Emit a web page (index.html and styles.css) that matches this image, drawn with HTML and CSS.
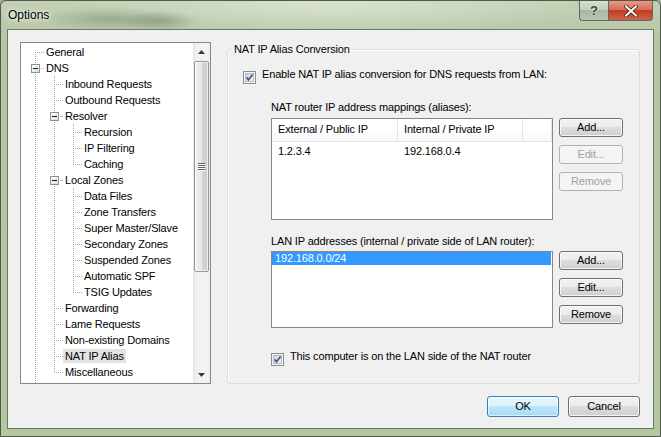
FILE: index.html
```html
<!DOCTYPE html>
<html>
<head>
<meta charset="utf-8">
<link rel="stylesheet" href="styles.css">
</head>
<body>
<div class="window">
  <div class="titlebar">
    <span class="title">Options</span>
    <div class="caption">
      <span class="cbtn help">?</span>
      <span class="cbtn close">
        <svg width="14" height="12" viewBox="0 0 14 12"><path d="M2 1.5 L12 10.5 M12 1.5 L2 10.5" stroke="#3a1a14" stroke-width="3.6" stroke-linecap="square" fill="none"/><path d="M2 1.5 L12 10.5 M12 1.5 L2 10.5" stroke="#ffffff" stroke-width="2" stroke-linecap="square" fill="none"/></svg>
      </span>
    </div>
  </div>
  <div class="client">
    <div class="main">
      <div class="tree">
        <div class="tree-items">
          <div class="row"><span class="g f"></span><span class="lbl">General</span></div>
          <div class="row"><span class="g t"><span class="box"></span></span><span class="lbl">DNS</span></div>
          <div class="row"><span class="g i"></span><span class="g t"></span><span class="lbl">Inbound Requests</span></div>
          <div class="row"><span class="g i"></span><span class="g t"></span><span class="lbl">Outbound Requests</span></div>
          <div class="row"><span class="g i"></span><span class="g t"><span class="box"></span></span><span class="lbl">Resolver</span></div>
          <div class="row"><span class="g i"></span><span class="g i"></span><span class="g t"></span><span class="lbl">Recursion</span></div>
          <div class="row"><span class="g i"></span><span class="g i"></span><span class="g t"></span><span class="lbl">IP Filtering</span></div>
          <div class="row"><span class="g i"></span><span class="g i"></span><span class="g l"></span><span class="lbl">Caching</span></div>
          <div class="row"><span class="g i"></span><span class="g t"><span class="box"></span></span><span class="lbl">Local Zones</span></div>
          <div class="row"><span class="g i"></span><span class="g i"></span><span class="g t"></span><span class="lbl">Data Files</span></div>
          <div class="row"><span class="g i"></span><span class="g i"></span><span class="g t"></span><span class="lbl">Zone Transfers</span></div>
          <div class="row"><span class="g i"></span><span class="g i"></span><span class="g t"></span><span class="lbl">Super Master/Slave</span></div>
          <div class="row"><span class="g i"></span><span class="g i"></span><span class="g t"></span><span class="lbl">Secondary Zones</span></div>
          <div class="row"><span class="g i"></span><span class="g i"></span><span class="g t"></span><span class="lbl">Suspended Zones</span></div>
          <div class="row"><span class="g i"></span><span class="g i"></span><span class="g t"></span><span class="lbl">Automatic SPF</span></div>
          <div class="row"><span class="g i"></span><span class="g i"></span><span class="g l"></span><span class="lbl">TSIG Updates</span></div>
          <div class="row"><span class="g i"></span><span class="g t"></span><span class="lbl">Forwarding</span></div>
          <div class="row"><span class="g i"></span><span class="g t"></span><span class="lbl">Lame Requests</span></div>
          <div class="row"><span class="g i"></span><span class="g t"></span><span class="lbl">Non-existing Domains</span></div>
          <div class="row"><span class="g i"></span><span class="g t"></span><span class="lbl sel">NAT IP Alias</span></div>
          <div class="row"><span class="g i"></span><span class="g l"></span><span class="lbl">Miscellaneous</span></div>
          <div class="row"><span class="g i"></span></div>
        </div>
        <div class="vscroll">
          <div class="arrow"><svg width="7" height="4" viewBox="0 0 7 4"><path d="M0 4 L3.5 0 L7 4 Z" fill="#3a3a3a"/></svg></div>
          <div class="track">
            <div class="thumb"><span class="grip"></span><span class="grip"></span><span class="grip"></span><span class="grip"></span></div>
          </div>
          <div class="arrow down"><svg width="7" height="4" viewBox="0 0 7 4"><path d="M0 0 L3.5 4 L7 0 Z" fill="#3a3a3a"/></svg></div>
        </div>
      </div>
      <fieldset class="group">
        <legend>NAT IP Alias Conversion</legend>
        <div class="check check1">
          <svg class="cb" width="13" height="13" viewBox="0 0 13 13"><defs><linearGradient id="cg1" x1="0" y1="0" x2="1" y2="1"><stop offset="0" stop-color="#cbcfd5"/><stop offset="1" stop-color="#f6f6f6"/></linearGradient></defs><rect x="0.5" y="0.5" width="12" height="12" fill="#f4f4f4" stroke="#8e8f8f"/><rect x="2.5" y="2.5" width="8" height="8" fill="url(#cg1)" stroke="#b9bec6"/><path d="M3.6 6.4 L5.5 8.8 L9.6 3.4" stroke="#4a5a86" stroke-width="1.7" fill="none"/></svg>
          <span>Enable NAT IP alias conversion for DNS requests from LAN:</span>
        </div>
        <div class="sublabel label1">NAT router IP address mappings (aliases):</div>
        <div class="listrow lr1">
          <div class="listview">
            <div class="lv-head"><span class="col c1">External / Public IP</span><span class="col c2">Internal / Private IP</span><span class="col c3"></span></div>
            <div class="lv-row"><span class="col c1">1.2.3.4</span><span class="col c2">192.168.0.4</span></div>
          </div>
          <div class="btncol">
            <button class="btn">Add...</button>
            <button class="btn" disabled>Edit...</button>
            <button class="btn" disabled>Remove</button>
          </div>
        </div>
        <div class="sublabel label2">LAN IP addresses (internal / private side of LAN router):</div>
        <div class="listrow lr2">
          <div class="listbox">
            <div class="lb-item sel">192.168.0.0/24</div>
          </div>
          <div class="btncol">
            <button class="btn">Add...</button>
            <button class="btn">Edit...</button>
            <button class="btn">Remove</button>
          </div>
        </div>
        <div class="check check2">
          <svg class="cb" width="13" height="13" viewBox="0 0 13 13"><defs><linearGradient id="cg2" x1="0" y1="0" x2="1" y2="1"><stop offset="0" stop-color="#cbcfd5"/><stop offset="1" stop-color="#f6f6f6"/></linearGradient></defs><rect x="0.5" y="0.5" width="12" height="12" fill="#f4f4f4" stroke="#8e8f8f"/><rect x="2.5" y="2.5" width="8" height="8" fill="url(#cg2)" stroke="#b9bec6"/><path d="M3.6 6.4 L5.5 8.8 L9.6 3.4" stroke="#4a5a86" stroke-width="1.7" fill="none"/></svg>
          <span>This computer is on the LAN side of the NAT router</span>
        </div>
      </fieldset>
    </div>
    <div class="footer">
      <button class="btn big default">OK</button>
      <button class="btn big">Cancel</button>
    </div>
  </div>
</div>
</body>
</html>
```
FILE: styles.css
```css
html, body {
  margin: 0;
  padding: 0;
}
body {
  width: 661px;
  height: 437px;
  overflow: hidden;
  background: #9fae93;
  font-family: "Liberation Sans", Arial, sans-serif;
  font-size: 11px;
  letter-spacing: -0.15px;
  color: #000;
}
.window {
  box-sizing: border-box;
  height: 437px;
  display: flex;
  flex-direction: column;
  border: 1px solid #4f5a4b;
  border-radius: 6px 6px 0 0;
  background:
    radial-gradient(ellipse 70px 12px at 110px 18px, rgba(90,110,80,.35), transparent),
    radial-gradient(ellipse 40px 10px at 160px 20px, rgba(80,100,70,.35), transparent),
    radial-gradient(ellipse 260px 30px at 330px 4px, rgba(235,242,225,.55), transparent),
    linear-gradient(#c3d0b6, #b5c6a4 40px, #b3c7a0);
}
.titlebar {
  height: 28px;
  display: flex;
  align-items: flex-start;
  flex: none;
}
.title {
  font-size: 12px;
  letter-spacing: 0;
  line-height: 15px;
  padding: 7px 0 0 7px;
  color: #000;
  text-shadow: 0 0 6px rgba(255,255,255,.9), 0 0 3px rgba(255,255,255,.9);
}
.caption {
  margin-left: auto;
  margin-right: 7px;
  display: flex;
}
.cbtn {
  box-sizing: border-box;
  height: 20px;
  display: flex;
  align-items: center;
  justify-content: center;
  border: 1px solid #5f6a5a;
  border-top: none;
}
.help {
  width: 29px;
  border-radius: 0 0 0 4px;
  border-right: none;
  background: linear-gradient(#d8e0d2, #c0ccb8 50%, #a9b6a1 50%, #b8c5b0);
  color: #3d3d3d;
  font-size: 13px;
  font-weight: bold;
  text-shadow: 0 0 2px #fff;
}
.close {
  width: 45px;
  border-radius: 0 0 4px 0;
  background: linear-gradient(#e99a86, #d66a52 50%, #c43c22 50%, #d0624a);
}
.client {
  flex: 1;
  margin: 0 6px 7px 6px;
  border: 1px solid #6c7866;
  background: #f0f0f0;
  padding: 12px 13px 11px 12px;
  display: flex;
  flex-direction: column;
}
.main {
  display: flex;
  gap: 16px;
  height: 342px;
}

/* tree */
.tree {
  box-sizing: border-box;
  width: 191px;
  height: 342px;
  border: 1px solid #828790;
  background: #fff;
  display: flex;
}
.tree-items {
  flex: 1;
  overflow: hidden;
  padding: 1px 0 0 5px;
}
.row {
  height: 16px;
  display: flex;
  align-items: center;
}
.g {
  flex: none;
  width: 19px;
  height: 16px;
  display: flex;
  align-items: flex-start;
  background-repeat: no-repeat;
  --v: repeating-linear-gradient(to bottom, #a0a0a0 0 1px, transparent 1px 2px);
  --h: repeating-linear-gradient(to right, #a0a0a0 0 1px, transparent 1px 2px);
}
.g.i {
  background-image: var(--v);
  background-position: 9px 0;
  background-size: 1px 16px;
}
.g.t {
  background-image: var(--v), var(--h);
  background-position: 9px 0, 9px 8px;
  background-size: 1px 16px, 10px 1px;
}
.g.l {
  background-image: var(--v), var(--h);
  background-position: 9px 0, 9px 8px;
  background-size: 1px 9px, 10px 1px;
}
.g.f {
  background-image: var(--v), var(--h);
  background-position: 9px 8px, 9px 8px;
  background-size: 1px 8px, 10px 1px;
}
.box {
  box-sizing: border-box;
  width: 9px;
  height: 9px;
  margin: 4px 0 0 5px;
  border: 1px solid #919191;
  background: linear-gradient(135deg, #ffffff, #dcdcdc);
  display: flex;
  align-items: center;
  justify-content: center;
}
.box::after {
  content: "";
  width: 5px;
  height: 1px;
  background: #1a1a1a;
}
.lbl {
  line-height: 14px;
  height: 14px;
  padding: 0 2px;
  margin-left: -1px;
  white-space: nowrap;
}
.lbl.sel {
  background: #e3e3e3;
}
.vscroll {
  flex: none;
  width: 17px;
  display: flex;
  flex-direction: column;
  background: linear-gradient(to right, #e3e3e3, #f0f0f0 3px, #f4f4f4 14px, #ececec);
}
.arrow {
  height: 17px;
  display: flex;
  align-items: center;
  justify-content: center;
  flex: none;
}
.track {
  flex: 1;
  padding-top: 1px;
}
.thumb {
  box-sizing: border-box;
  margin: 0 1px;
  height: 211px;
  border: 1px solid #979797;
  border-radius: 2px;
  background: linear-gradient(to right, #f1f1f1, #e6e6e6 50%, #d6d6d6 50%, #cbcbcb);
  box-shadow: inset 0 0 0 1px rgba(255,255,255,.7);
  display: flex;
  flex-direction: column;
  justify-content: center;
  align-items: center;
  gap: 1px;
}
.grip {
  width: 7px;
  height: 1px;
  background: #5e5e5e;
  box-shadow: 0 1px 0 #fff;
}

/* group */
.group {
  box-sizing: border-box;
  width: 413px;
  margin: 1px 0 0 0;
  padding: 0;
  border: 1px solid #d5dfe5;
  border-radius: 3px;
  box-shadow: inset 1px 1px 0 #fff;
  min-width: 0;
}
.group legend {
  padding: 0 2px;
  margin-left: 4px;
  line-height: 13px;
}
.check {
  display: flex;
  align-items: flex-start;
  gap: 6px;
  line-height: 13px;
}
.cb {
  flex: none;
  margin-top: 3px;
}
.check1 {
  margin: 12px 0 0 15px;
}
.sublabel {
  line-height: 13px;
  margin-left: 43px;
}
.label1 {
  margin-top: 17px;
}
.listrow {
  display: flex;
  gap: 6px;
  margin-left: 43px;
  align-items: flex-start;
}
.lr1 {
  margin-top: 4px;
}
.label2 {
  margin-top: 15px;
}
.lr2 {
  margin-top: 3px;
}
.check2 {
  margin: 22px 0 0 43px;
}
.listview, .listbox {
  box-sizing: border-box;
  width: 282px;
  border: 1px solid #828790;
  background: #fff;
}
.listview {
  height: 102px;
}
.listbox {
  height: 77px;
}
.lv-head {
  display: flex;
  height: 23px;
  box-sizing: border-box;
  border-bottom: 1px solid #e5e5e5;
  background: linear-gradient(#ffffff, #ffffff 40%, #f7f8fa);
}
.col {
  box-sizing: border-box;
  flex: none;
  padding-left: 6px;
  white-space: nowrap;
  line-height: 13px;
}
.lv-head .col {
  padding-top: 4px;
  border-right: 1px solid #e5e5e5;
}
.lv-head .c3 {
  flex: 1;
}
.c1 {
  width: 126px;
}
.c2 {
  width: 125px;
}
.lv-row {
  display: flex;
  padding-top: 3px;
}
.lb-item {
  line-height: 13px;
  height: 13px;
  padding-left: 3px;
  margin-right: 1px;
}
.lb-item.sel {
  background: #3399ff;
  color: #fff;
}
.btncol {
  display: flex;
  flex-direction: column;
  gap: 8px;
}

/* buttons */
.btn {
  box-sizing: border-box;
  width: 64px;
  height: 19px;
  padding: 0;
  border: 1px solid #707070;
  border-radius: 3px;
  background: linear-gradient(#f2f2f2, #ebebeb 50%, #dddddd 50%, #cfcfcf);
  box-shadow: inset 0 0 0 1px rgba(255,255,255,.75);
  font-family: "Liberation Sans", Arial, sans-serif;
  font-size: 11px;
  letter-spacing: -0.15px;
  line-height: 13px;
  color: #000;
}
.btn:disabled {
  border-color: #adb2b5;
  background: #f4f4f4;
  color: #a0a0a0;
  box-shadow: none;
}
.btn.big {
  width: 72px;
  height: 21px;
}
.btn.default {
  border-color: #3c7fb1;
  background: linear-gradient(#eaf6fd, #d9f0fc 50%, #bee6fd 50%, #a7d9f5);
  box-shadow: inset 0 0 0 1px rgba(255,255,255,.6);
}
.footer {
  margin-top: 12px;
  display: flex;
  justify-content: flex-end;
  gap: 9px;
}
```
